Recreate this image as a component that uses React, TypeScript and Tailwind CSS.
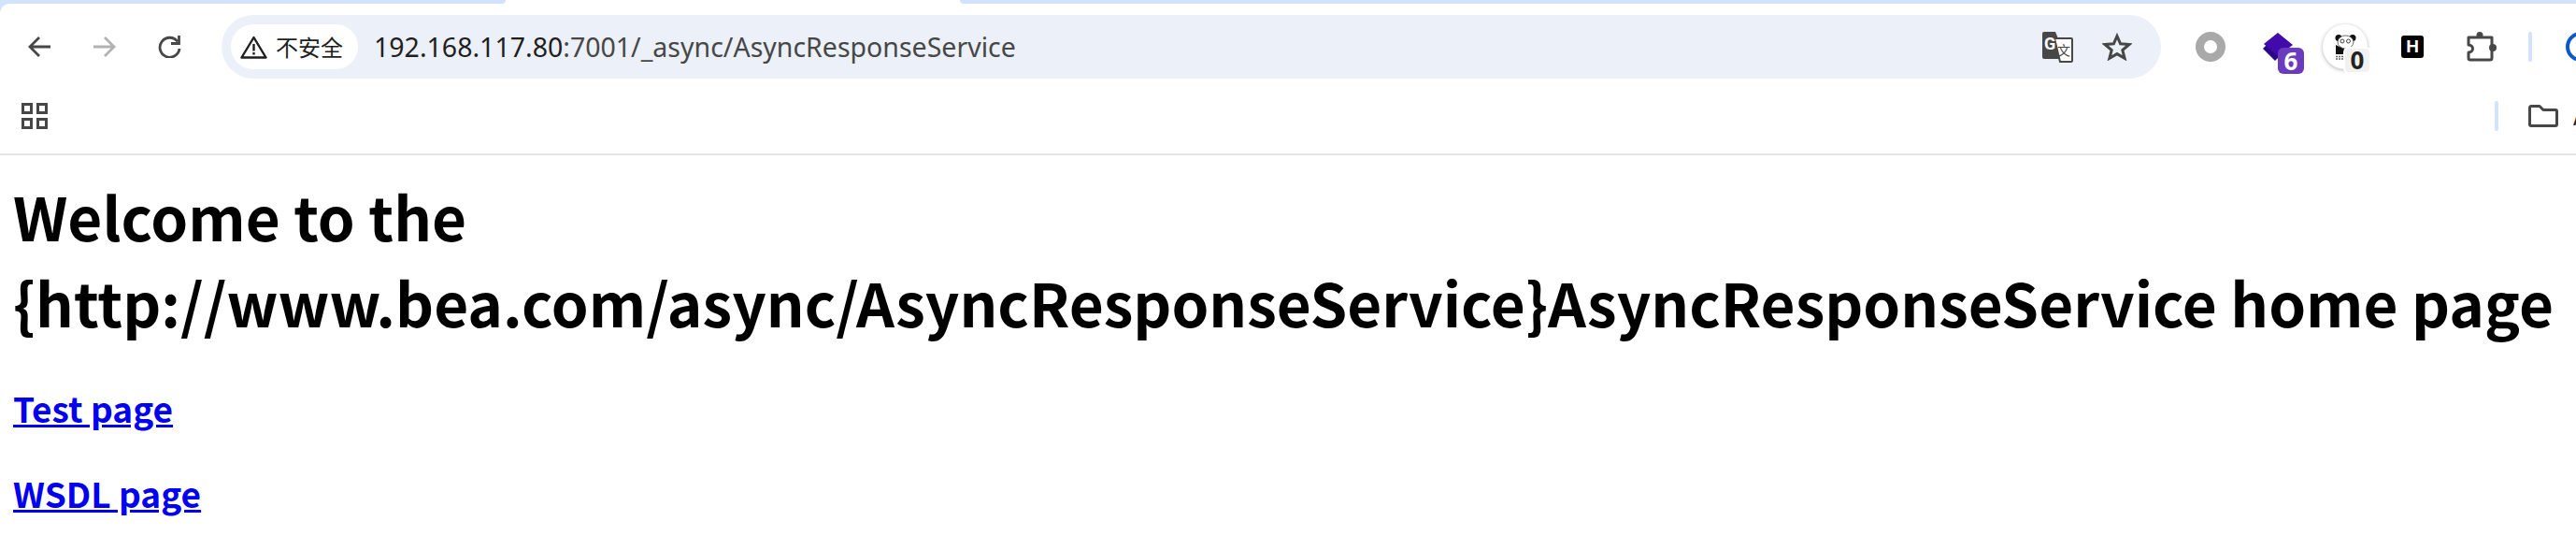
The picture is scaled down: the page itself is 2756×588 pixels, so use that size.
import React from 'react';

const Back = () => (
  <svg width="25" height="24" viewBox="0 0 25 24" fill="none" stroke="#474747" strokeWidth="2.8">
    <path d="M25 12H3M13 2 3 12l10 10" />
  </svg>
);

const Forward = () => (
  <svg width="25" height="24" viewBox="0 0 25 24" fill="none" stroke="#b2b2b2" strokeWidth="2.8">
    <path d="M0 12h22M12 2l10 10-10 10" />
  </svg>
);

const Reload = () => (
  <svg width="25" height="24" viewBox="0 0 25 24" fill="none" stroke="#474747" strokeWidth="2.8">
    <path d="M21 6.500A10.500 10.500 0 1 0 23 14" />
    <path d="M22.500 0v8.500H14" />
  </svg>
);

const Warning = () => (
  <svg width="29" height="25" viewBox="0 0 29 25" fill="none" stroke="#1f1f1f" strokeWidth="2.4">
    <path d="M14.500 2 L27.500 23.500 H1.500 Z" strokeLinejoin="round" />
    <path d="M14.500 9v7.500M14.500 18v2.600" />
  </svg>
);

const Translate = () => (
  <svg width="33" height="33" viewBox="0 0 33 33">
    <path d="M2 0h12l12 29H2a2 2 0 0 1-2-2V2a2 2 0 0 1 2-2z" fill="#474747" />
    <path d="M13 7h18a1 1 0 0 1 1 1v23a1 1 0 0 1-1 1H19z" fill="#fff" stroke="#474747" strokeWidth="2" />
    <text x="2" y="19" fontSize="18" fontWeight="700" fill="#fff" fontFamily="Roboto, sans-serif">G</text>
    <text x="16" y="25" fontSize="14" fill="#474747" fontFamily="'Noto Sans CJK SC', sans-serif">文</text>
  </svg>
);

const Star = () => (
  <svg width="32" height="30" viewBox="0 0 32 30" fill="none" stroke="#474747" strokeWidth="3">
    <path d="M16 3.500l3.600 8.300 9.400.7-7.200 6 2.300 8.800L16 22.600l-8.100 4.700 2.300-8.800-7.200-6 9.400-.7z" />
  </svg>
);

const Stack = () => (
  <svg width="32" height="30" viewBox="0 0 32 30">
    <path d="M5 12 0 17l13 13 13-13-5-5z" fill="#2a0a84" />
    <path d="M16 0l16 13-16 12L1 12z" fill="#4209ab" />
  </svg>
);

const Panda = () => (
  <svg width="23" height="27" viewBox="0 0 23 27">
    <circle cx="4" cy="3.500" r="3.500" fill="#111" />
    <circle cx="19" cy="3.500" r="3.500" fill="#111" />
    <ellipse cx="11.500" cy="8" rx="8.500" ry="7" fill="#fff" stroke="#444" strokeWidth="0.8" />
    <circle cx="8" cy="7" r="2" fill="none" stroke="#444" />
    <circle cx="14.500" cy="7" r="2" fill="none" stroke="#444" />
    <path d="M1 11v10h12l-2-5z" fill="#111" />
    <path d="M1 23.500h20M1 26h20" stroke="#666" strokeWidth="1.400" strokeDasharray="2 1" />
  </svg>
);

const Puzzle = () => (
  <svg width="32" height="32" viewBox="0 0 32 32" fill="none" stroke="#474747" strokeWidth="3" strokeLinejoin="round">
    <path d="M2 6h25v22a2 2 0 0 1-2 2H4a2 2 0 0 1-2-2v-6c3 0 4.500-2 4.500-4S5 14 2 14z" />
    <circle cx="14" cy="3.500" r="3.500" fill="#474747" stroke="none" />
    <circle cx="28" cy="17" r="4" fill="#474747" stroke="none" />
  </svg>
);

const Folder = () => (
  <svg width="32" height="24" viewBox="0 0 32 24" fill="none" stroke="#474747" strokeWidth="3" strokeLinejoin="round">
    <path d="M3 1.500h9l4 4h13a1.500 1.500 0 0 1 1.500 1.500v14a1.500 1.500 0 0 1-1.500 1.500H3A1.500 1.500 0 0 1 1.500 21V3A1.500 1.500 0 0 1 3 1.500z" />
  </svg>
);

const Apps = () => (
  <div className="grid grid-cols-2 gap-[4px] w-[28px]">
    {[0, 1, 2, 3].map((i) => (
      <div key={i} className="w-[12px] h-[12px] border-[3px] border-[#474747]" />
    ))}
  </div>
);

export default function App() {
  return (
    <div className="w-[2756px] h-[588px] overflow-hidden bg-white text-black font-['Noto_Sans_CJK_SC',sans-serif]">
      <div className="h-[4px] flex">
        <div className="w-[541px] bg-[#d3e3fd] rounded-br-[10px]" />
        <div className="w-[486px]" />
        <div className="flex-1 bg-[#d3e3fd] rounded-bl-[10px]" />
      </div>

      <div className="bg-[#d3e3fd]">
        <div className="bg-white rounded-tl-[10px] border-b-2 border-[#e3e3e3] h-[162px]">
          <div className="h-[92px] flex items-center">
            <div className="pl-[29px] w-[237px] shrink-0 flex items-center gap-[46px]">
              <Back />
              <Forward />
              <div className="-ml-[2px]">
                <Reload />
              </div>
            </div>

            <div className="w-[2075px] h-[68px] shrink-0 rounded-full bg-[#ecf1f9] flex items-center pl-[10px] pr-[31px]">
              <div className="w-[136px] h-[48px] pl-[10px] bg-white rounded-full flex items-center gap-[9px] text-[24px] text-[#1f1f1f]">
                <Warning />
                不安全
              </div>
              <div className="ml-[17px] text-[28.500px] text-[#1f1f1f] font-['Noto_Sans',sans-serif]">
                192.168.117.80<span className="text-[#474747]">:7001/_async/AsyncResponseService</span>
              </div>
              <div className="ml-auto flex items-center gap-[31px]">
                <Translate />
                <Star />
              </div>
            </div>

            <div className="flex items-center">
              <div className="ml-[37px] w-[32px] h-[32px] rounded-full border-[9px] border-[#a9a9a9]" />
              <div className="relative ml-[40px] w-[32px] h-[30px]">
                <Stack />
                <div className="absolute left-[16px] top-[16px] w-[28px] h-[28px] rounded-[6px] bg-[#6a3bbd] text-white text-[26px] font-bold flex items-center justify-center font-['Noto_Sans',sans-serif]">
                  6
                </div>
              </div>
              <div className="relative ml-[32px] w-[48px] h-[48px] rounded-full bg-white shadow-[0_1px_4px_rgba(0,0,0,0.3)] flex items-center justify-center">
                <Panda />
                <div className="absolute left-[22px] top-[24px] w-[30px] h-[29px] rounded-[6px] bg-[#f1f1f1] border-2 border-white text-[#222] text-[26px] font-bold flex items-center justify-center font-['Noto_Sans',sans-serif]">
                  0
                </div>
              </div>
              <div className="ml-[36px] w-[24px] h-[24px] rounded-[3px] bg-black text-white text-[19px] font-bold flex items-center justify-center font-['Liberation_Sans',sans-serif]">
                H
              </div>
              <div className="ml-[46px]">
                <Puzzle />
              </div>
              <div className="ml-[34px] w-[4px] h-[32px] rounded-full bg-[#d3e3fd]" />
              <div className="ml-[36px] w-[32px] h-[32px] shrink-0 rounded-full border-[4px] border-[#0b57d0]" />
            </div>
          </div>

          <div className="h-[56px] flex items-center pl-[23px]">
            <Apps />
            <div className="ml-auto flex items-center">
              <div className="w-[4px] h-[32px] rounded-full bg-[#d3e3fd]" />
              <div className="ml-[32px]">
                <Folder />
              </div>
              <div className="ml-[16px] w-[3px] overflow-hidden text-[24px] text-[#1f1f1f]">A</div>
            </div>
          </div>
        </div>
      </div>

      <main className="px-[14px] pt-[18px]">
        <h1 className="text-[63.800px] leading-[92px] font-bold">
          Welcome to the {'{http://www.bea.com/async/AsyncResponseService}'}AsyncResponseService home page
        </h1>
        <p className="mt-[40px] text-[37px] leading-[56px] font-bold">
          <a href="#test" className="text-[#0000ee] underline">Test page</a>
        </p>
        <p className="mt-[35px] text-[37px] leading-[56px] font-bold">
          <a href="#wsdl" className="text-[#0000ee] underline">WSDL page</a>
        </p>
      </main>
    </div>
  );
}
